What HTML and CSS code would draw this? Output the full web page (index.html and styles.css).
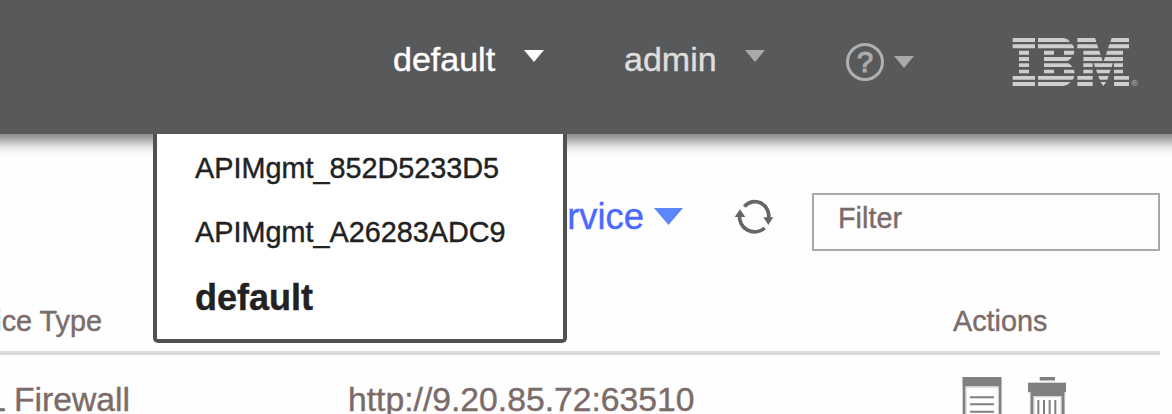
FILE: index.html
```html
<!DOCTYPE html>
<html lang="en">
<head>
<meta charset="utf-8">
<title>Services</title>
<link rel="stylesheet" href="styles.css">
</head>
<body>
<header class="topbar">
  <div class="domain">
    <span>default</span>
    <svg class="caret" viewBox="0 0 20 12"><path d="M0 0H20L10 12Z"/></svg>
    <ul class="menu">
      <li class="menu-item">APIMgmt_852D5233D5</li>
      <li class="menu-item">APIMgmt_A26283ADC9</li>
      <li class="menu-item current">default</li>
    </ul>
  </div>
  <div class="user">
    <span>admin</span>
    <svg class="caret" viewBox="0 0 20 12"><path d="M0 0H20L10 12Z"/></svg>
  </div>
  <div class="help">
    <svg class="help-icon" viewBox="0 0 40 40"><circle cx="20" cy="20" r="17.5"/><text x="20" y="29.8" text-anchor="middle">?</text></svg>
    <svg class="caret" viewBox="0 0 20 12"><path d="M0 0H20L10 12Z"/></svg>
  </div>
  <svg class="logo" viewBox="36 36 384 150" role="img" aria-label="IBM">
    <path d="M38 39H105V51H38ZM38 58H105V70H38ZM57 77H87V89H57ZM57 96H87V108H57ZM57 115H87V126H57ZM57 134H87V145H57ZM38 153H105V164H38ZM38 171H105V183H38Z"/>
    <path d="M114 39H190Q204 41 210 51H114ZM114 58H216Q222 63 222 70H114ZM132 77H162V89H132ZM192 77H223Q223 84 220 89H192ZM132 96H216Q212 103 203 108H132ZM132 115H205Q213 119 217 126H132ZM132 134H162V145H132ZM192 134H222L224 145H192ZM114 153H223Q222 160 218 164H114ZM114 171H212Q204 181 190 183H114Z"/>
    <path d="M232 39H285L289 51H232ZM335 39H387V51H331ZM232 58H291L295 70H232ZM328 58H387V70H324ZM250 77H298L302 89H250ZM322 77H369V89H318ZM250 96H304L308 108H250ZM315 96H369V108H311ZM250 115H278V126H250ZM281 115H339L335 126H285ZM342 115H369V126H342ZM250 134H278V145H250ZM288 134H332L328 145H292ZM342 134H369V145H342ZM232 153H278V164H232ZM295 153H326L322 164H299ZM342 153H387V164H342ZM232 171H278V183H232ZM301 171H319L310 183ZM342 171H387V183H342Z"/>
    <g class="mark"><circle cx="404" cy="174" r="8"/><path d="M401 179V169H406Q409 172 405 174H401M404 174L408 179"/></g>
  </svg>
</header>
<main>
  <div class="toolbar">
    <div class="new-service">
      <span>New Service</span>
      <svg viewBox="0 0 29 17"><path d="M0 0H29L14.5 17Z"/></svg>
    </div>
    <svg class="refresh" viewBox="582 232 120 120">
      <path d="M613 261A42 45 0 0 1 686 298M674 325A45 45 0 0 1 599 286"/>
      <path class="tip" d="M670 293L700 293L685 316ZM584 292L616 292L600 269Z"/>
    </svg>
    <div class="filter">Filter</div>
  </div>
  <div class="table">
    <div class="row head">
      <div class="type">Service Type</div>
      <div class="url"></div>
      <div class="actions">Actions</div>
    </div>
    <div class="row">
      <div class="type">XML Firewall</div>
      <div class="url">http://9.20.85.72:63510</div>
      <div class="icons">
        <svg class="doc" viewBox="66 231 120 150">
          <path class="edge" d="M68 231V381M184 231V381M78 258V381M175 258V381M78 261H175"/>
          <path d="M68 231H184V259H68ZM69 259H76V381H69ZM177 259H184V381H177ZM90 289H162V295H90ZM90 310H162V316H90ZM90 332H162V338H90Z"/>
        </svg>
        <svg class="trash" viewBox="264 231 114 150">
          <path class="edge" d="M300 242H345M264 248H378M271 277V381M374 277V381M282 290V381M363 290V381M282 290H363"/>
          <path d="M299 231H345V241H299ZM264 249H378V277H373V381H365V288H280V381H272V277H264ZM292 300H298V381H292ZM309 300H315V381H309ZM326 300H332V381H326ZM343 300H349V381H343Z"/>
        </svg>
      </div>
    </div>
  </div>
</main>
</body>
</html>
```
FILE: styles.css
```css
* { box-sizing: border-box; }
body {
  margin: 0;
  width: 1172px;
  height: 414px;
  overflow: hidden;
  background: #fefefe;
  color: #7b6b69;
  font-family: "Liberation Sans", Arial, sans-serif;
  white-space: nowrap;
  -webkit-text-stroke: .4px currentColor;
}
svg { display: block; flex: none; }
.topbar {
  position: relative;
  z-index: 1;
  display: flex;
  height: 134px;
  padding-left: 393px;
  background: #58595b;
  color: #dedede;
  font-size: 34px;
  line-height: 40px;
}
.topbar::after {
  content: "";
  position: absolute;
  top: 134px;
  left: 0;
  width: 100%;
  height: 24px;
  background: linear-gradient(rgba(0, 0, 0, .45), rgba(0, 0, 0, .3) 25%, rgba(0, 0, 0, .12) 50%, rgba(0, 0, 0, .03) 75%, transparent);
}
.domain, .user, .help { display: flex; align-items: flex-start; }
.domain { width: 231px; padding-top: 39px; color: #fff; }
.user { width: 221px; padding-top: 39px; }
.domain > span { width: 131px; }
.user > span { width: 121px; }
.caret { width: 20px; height: 12px; margin-top: 11px; fill: #a9a9aa; }
.domain .caret { fill: #fff; }
.help { width: 167px; padding-top: 42px; gap: 9px; }
.help .caret { margin-top: 14px; }
.help-icon { width: 40px; height: 40px; }
.help-icon circle { fill: none; stroke: #b0b0b1; stroke-width: 3; }
.help-icon text { fill: #aaabac; font-size: 29px; stroke: #aaabac; stroke-width: 1.2; }
.logo { width: 128px; height: 50px; margin-top: 37px; fill: #cecece; }
.mark { fill: none; stroke: #aaa; stroke-width: 2; }
.menu {
  position: absolute;
  z-index: 1;
  top: 134px;
  left: 153px;
  width: 414px;
  height: 209px;
  margin: 0;
  padding: 2px 38px;
  border: 4px solid #505151;
  border-top: 0;
  border-radius: 0 0 5px 5px;
  background: #fff;
  color: #222;
  list-style: none;
}
.menu-item { height: 64px; font-size: 28.8px; line-height: 64px; }
.menu-item.current { font-size: 36px; font-weight: bold; line-height: 68px; }
.toolbar { display: flex; height: 158px; padding-top: 59px; }
.new-service {
  display: flex;
  justify-content: flex-end;
  width: 683px;
  gap: 10px;
  color: #4b69ff;
  font-size: 36.4px;
  line-height: 48px;
}
.new-service svg { width: 29px; height: 17px; margin-top: 15px; fill: #5b87fb; }
.refresh { width: 40px; height: 40px; margin: 4px 0 0 51px; }
.refresh path { fill: none; stroke: #666; stroke-width: 11; }
.refresh .tip { fill: #666; stroke: none; }
.filter {
  width: 348px;
  height: 58px;
  margin-left: 38px;
  padding-left: 24px;
  border: 2px solid #a9a9a9;
  font-size: 28.8px;
  line-height: 46px;
}
.row { display: flex; width: 1160px; padding-top: 22px; font-size: 33.7px; line-height: 44px; }
.head { height: 63px; padding-top: 7px; border-bottom: 4px solid #d9d9d9; font-size: 28.8px; }
.type { display: flex; justify-content: flex-end; width: 130px; }
.head .type { width: 102px; margin-right: 28px; }
.url { width: 604px; padding-left: 218px; }
.head .url { width: 823px; }
.icons { display: flex; gap: 26px; margin-left: 228px; fill: #808080; }
.doc { width: 40px; height: 50px; }
.trash { width: 38px; height: 50px; }
.edge { fill: none; stroke: #ccc; stroke-width: 3; }
```
